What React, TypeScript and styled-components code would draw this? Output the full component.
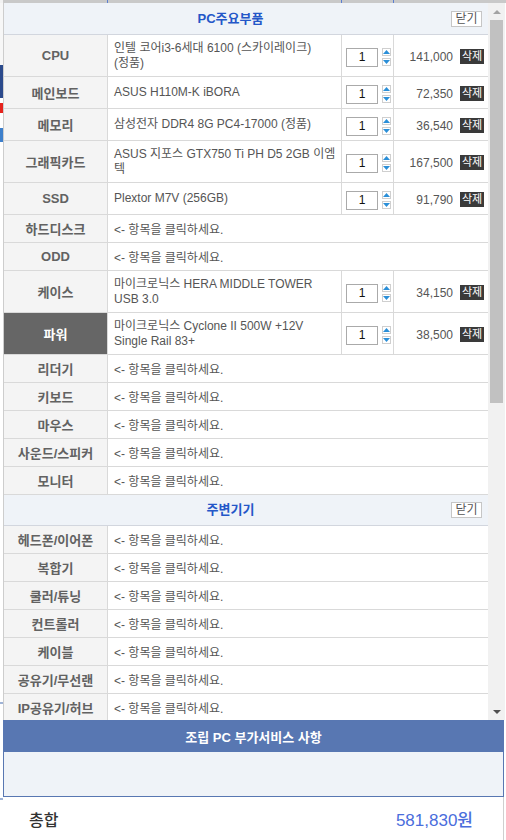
import React from 'react';
import styled, { createGlobalStyle } from 'styled-components';

const GlobalStyle = createGlobalStyle`
  html, body {
    margin: 0;
    padding: 0;
    background: #ffffff;
  }
  body {
    font-family: "Liberation Sans", "Noto Sans CJK KR", sans-serif;
    -webkit-font-smoothing: antialiased;
  }
`;

type Part = {
  label: string;
  lines?: string[];
  price?: string;
  tall?: boolean;
  selected?: boolean;
};

const MAIN_PARTS: Part[] = [
  { label: 'CPU', lines: ['인텔 코어i3-6세대 6100 (스카이레이크)', '(정품)'], price: '141,000', tall: true },
  { label: '메인보드', lines: ['ASUS H110M-K iBORA'], price: '72,350' },
  { label: '메모리', lines: ['삼성전자 DDR4 8G PC4-17000 (정품)'], price: '36,540' },
  { label: '그래픽카드', lines: ['ASUS 지포스 GTX750 Ti PH D5 2GB 이엠', '텍'], price: '167,500', tall: true },
  { label: 'SSD', lines: ['Plextor M7V (256GB)'], price: '91,790' },
  { label: '하드디스크' },
  { label: 'ODD' },
  { label: '케이스', lines: ['마이크로닉스 HERA MIDDLE TOWER', 'USB 3.0'], price: '34,150', tall: true },
  { label: '파워', lines: ['마이크로닉스 Cyclone II 500W +12V', 'Single Rail 83+'], price: '38,500', tall: true, selected: true },
  { label: '리더기' },
  { label: '키보드' },
  { label: '마우스' },
  { label: '사운드/스피커' },
  { label: '모니터' },
];

const EXTRA_PARTS: Part[] = [
  { label: '헤드폰/이어폰' },
  { label: '복합기' },
  { label: '쿨러/튜닝' },
  { label: '컨트롤러' },
  { label: '케이블' },
  { label: '공유기/무선랜' },
  { label: 'IP공유기/허브' },
];

const EMPTY_TEXT = '<- 항목을 클릭하세요.';

const SpinUp = () => (
  <svg width="7" height="4" viewBox="0 0 7 4">
    <polygon points="0,4 3.5,0 7,4" fill="#2a8fd8" />
  </svg>
);

const SpinDown = () => (
  <svg width="7" height="4" viewBox="0 0 7 4">
    <polygon points="0,0 7,0 3.5,4" fill="#2a8fd8" />
  </svg>
);

const PartRow: React.FC<{ part: Part }> = ({ part }) => {
  const filled = !!part.lines;
  const height = part.tall ? 42 : filled ? 32 : 28;
  return (
    <Row $height={height} $empty={!filled}>
      <LabelCell $selected={!!part.selected}>{part.label}</LabelCell>
      {filled ? (
        <>
          <NameCell>
            <Lines>
              {part.lines!.map((l) => (
                <Line key={l}>{l}</Line>
              ))}
            </Lines>
          </NameCell>
          <QtyCell>
            <QtyInput>1</QtyInput>
            <Spinner>
              <SpinButton>
                <SpinUp />
              </SpinButton>
              <SpinButton>
                <SpinDown />
              </SpinButton>
            </Spinner>
          </QtyCell>
          <PriceCell>
            <Price>{part.price}</Price>
            <DeleteButton>삭제</DeleteButton>
          </PriceCell>
        </>
      ) : (
        <NameCell $last>{EMPTY_TEXT}</NameCell>
      )}
    </Row>
  );
};

const Section: React.FC<{ title: string; height: number; parts: Part[] }> = ({ title, height, parts }) => (
  <>
    <SectionHeader $height={height}>
      <SectionTitle>{title}</SectionTitle>
      <CloseButton>닫기</CloseButton>
    </SectionHeader>
    {parts.map((p) => (
      <PartRow key={p.label} part={p} />
    ))}
  </>
);

export default function App() {
  return (
    <>
      <GlobalStyle />
      <Page>
        <TopStrip>
          <StripGap />
          <StripSeg $w={104} />
          <StripTick />
          <StripSeg $w={233} />
          <StripTick />
          <StripSeg $w={51} />
          <StripTick />
          <StripSeg $w={112} />
        </TopStrip>
        <Body>
          <LeftEdge>
            <EdgeBlock $h={62} $color="#f7f7f7" />
            <EdgeBlock $h={33} $color="#2b4a8c" />
            <EdgeBlock $h={5} $color="#ffffff" />
            <EdgeBlock $h={10} $color="#e5231d" />
            <EdgeBlock $h={15} $color="#ffffff" />
            <EdgeBlock $h={14} $color="#3d7fcb" />
            <EdgeBlock $h={560} $color="#ffffff" />
            <EdgeBlock $h={2} $color="#9fb3d6" />
            <EdgeBlock $h={94} $color="#ffffff" />
            <EdgeBlock $h={2} $color="#9fb3d6" />
          </LeftEdge>
          <Panel>
            <ScrollArea>
              <Content>
                <Section title="PC주요부품" height={32} parts={MAIN_PARTS} />
                <Section title="주변기기" height={31} parts={EXTRA_PARTS} />
              </Content>
              <ScrollBar>
                <ScrollArrowBox>
                  <ArrowUp />
                </ScrollArrowBox>
                <Thumb />
                <ScrollFill />
                <ScrollArrowBox>
                  <ArrowDown />
                </ScrollArrowBox>
              </ScrollBar>
            </ScrollArea>
            <ServiceHeader>조립 PC 부가서비스 사항</ServiceHeader>
            <ServiceBody />
            <TotalRow>
              <TotalLabel>총합</TotalLabel>
              <TotalValue>581,830원</TotalValue>
            </TotalRow>
          </Panel>
        </Body>
      </Page>
    </>
  );
}

const Page = styled.div`
  width: 506px;
  height: 840px;
  overflow: hidden;
  display: flex;
  flex-direction: column;
`;

const TopStrip = styled.div`
  display: flex;
  height: 3px;
  flex-shrink: 0;
  background: #c9c9c9;
`;
const StripGap = styled.div`
  width: 3px;
  background: #f2f2f2;
`;
const StripSeg = styled.div<{ $w: number }>`
  width: ${(p) => p.$w}px;
`;
const StripTick = styled.div`
  width: 1px;
  background: #5b7fd0;
`;

const Body = styled.div`
  display: flex;
  flex: 1;
`;

const LeftEdge = styled.div`
  width: 3px;
  display: flex;
  flex-direction: column;
`;
const EdgeBlock = styled.div<{ $h: number; $color: string }>`
  height: ${(p) => p.$h}px;
  background: ${(p) => p.$color};
  flex-shrink: 0;
`;

const Panel = styled.div`
  width: 502px;
  display: flex;
  flex-direction: column;
`;

const ScrollArea = styled.div`
  height: 717px;
  display: flex;
  overflow: hidden;
`;

const Content = styled.div`
  flex: 1;
  overflow: hidden;
  border-left: 1px solid #cdcdcd;
`;

const SectionHeader = styled.div<{ $height: number }>`
  box-sizing: border-box;
  height: ${(p) => p.$height}px;
  display: grid;
  grid-template-columns: 1fr 31px;
  align-items: center;
  padding-right: 6px;
  background: #eff3f8;
  border-bottom: 1px solid #d2d6de;
`;
const SectionTitle = styled.div`
  text-align: center;
  padding-left: 6px;
  font-size: 13px;
  font-weight: 700;
  color: #2457c8;
  line-height: 16px;
`;
const CloseButton = styled.div`
  box-sizing: border-box;
  width: 31px;
  height: 16px;
  border: 1px solid #c6c6c6;
  background: #ffffff;
  font-size: 12px;
  line-height: 14px;
  color: #555555;
  text-align: center;
`;

const Row = styled.div<{ $height: number; $empty: boolean }>`
  box-sizing: border-box;
  display: grid;
  grid-template-columns: ${(p) => (p.$empty ? '104px 1fr' : '104px 234px 52px 1fr')};
  height: ${(p) => p.$height}px;
  border-bottom: 1px solid #d9d9d9;
`;

const LabelCell = styled.div<{ $selected: boolean }>`
  box-sizing: border-box;
  display: flex;
  align-items: center;
  justify-content: center;
  border-right: 1px solid #d9d9d9;
  background: ${(p) => (p.$selected ? '#666666' : '#f4f4f4')};
  color: ${(p) => (p.$selected ? '#ffffff' : '#626262')};
  font-size: 13px;
  font-weight: 700;
  white-space: nowrap;
`;

const NameCell = styled.div<{ $last?: boolean }>`
  box-sizing: border-box;
  display: flex;
  align-items: center;
  padding-left: 6px;
  border-right: ${(p) => (p.$last ? 'none' : '1px solid #d9d9d9')};
  font-size: 12px;
  color: #555555;
  white-space: nowrap;
`;

const Lines = styled.div`
  line-height: 15px;
`;
const Line = styled.span`
  display: block;
  white-space: nowrap;
`;

const QtyCell = styled.div`
  box-sizing: border-box;
  display: flex;
  align-items: center;
  gap: 4px;
  padding: 3px 0 0 4px;
  border-right: 1px solid #d9d9d9;
`;
const QtyInput = styled.div`
  box-sizing: border-box;
  width: 32px;
  height: 19px;
  border: 1px solid #aaaaaa;
  font-size: 12px;
  line-height: 17px;
  color: #111111;
  text-align: center;
  background: #ffffff;
`;
const Spinner = styled.div`
  display: flex;
  flex-direction: column;
  gap: 2px;
  margin-top: -1px;
`;
const SpinButton = styled.div`
  box-sizing: border-box;
  width: 9px;
  height: 8px;
  border: 1px solid #cfcfcf;
  display: flex;
  align-items: center;
  justify-content: center;
  background: #ffffff;
`;

const PriceCell = styled.div`
  display: flex;
  align-items: center;
  justify-content: flex-end;
  gap: 7px;
  padding: 2px 4px 0 0;
`;
const Price = styled.span`
  font-size: 12px;
  color: #555555;
`;
const DeleteButton = styled.span`
  width: 24px;
  height: 15px;
  background: #3a3a3a;
  color: #ffffff;
  font-size: 11px;
  line-height: 15px;
  text-align: center;
`;

const ScrollBar = styled.div`
  width: 17px;
  flex-shrink: 0;
  background: #f1f1f1;
  display: flex;
  flex-direction: column;
  align-items: center;
`;
const ScrollArrowBox = styled.div`
  height: 17px;
  width: 17px;
  display: flex;
  align-items: center;
  justify-content: center;
`;
const ArrowUp = styled.div`
  width: 0;
  height: 0;
  border-left: 4px solid transparent;
  border-right: 4px solid transparent;
  border-bottom: 4px solid #a3a3a3;
`;
const ArrowDown = styled.div`
  width: 0;
  height: 0;
  border-left: 4px solid transparent;
  border-right: 4px solid transparent;
  border-top: 4px solid #505050;
`;
const Thumb = styled.div`
  width: 13px;
  height: 383px;
  background: #c1c1c1;
`;
const ScrollFill = styled.div`
  flex: 1;
`;

const ServiceHeader = styled.div`
  width: 501px;
  height: 32px;
  display: flex;
  align-items: center;
  justify-content: center;
  background: #5877b2;
  color: #ffffff;
  font-size: 13px;
  font-weight: 700;
`;
const ServiceBody = styled.div`
  box-sizing: border-box;
  width: 501px;
  height: 45px;
  background: #eff3f8;
  border: 1px solid #5877b2;
  border-top: none;
`;

const TotalRow = styled.div`
  box-sizing: border-box;
  width: 501px;
  height: 43px;
  display: flex;
  align-items: center;
  justify-content: space-between;
  padding: 0 30px 0 26px;
  border-right: 1px solid #cfcfcf;
`;
const TotalLabel = styled.span`
  font-size: 16px;
  color: #333333;
  font-weight: 500;
`;
const TotalValue = styled.span`
  font-size: 17px;
  color: #4a6ddc;
  font-weight: 500;
`;
